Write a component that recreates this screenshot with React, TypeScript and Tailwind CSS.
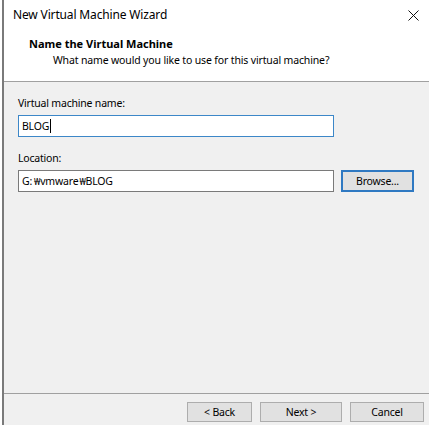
import React from "react";

export default function App() {
  return (
    <div
      className="w-[437px] h-[432px] bg-white overflow-hidden text-[10.5px] tracking-[-0.2px] text-black"
      style={{ fontFamily: '"Noto Sans", "Open Sans", sans-serif' }}
    >
      <div className="ml-[2px] w-[427px] h-[425px] border-l-2 border-[#7a7a7a] flex flex-col">
        {/* Title bar */}
        <div className="h-[30px] flex items-center justify-between bg-white">
          <span className="pl-[9px] leading-none text-[12px] tracking-[-0.15px]">New Virtual Machine Wizard</span>
          <svg width="11" height="11" viewBox="0 0 11 11" className="mr-[10px]">
            <path d="M0.5 0.5 L10.5 10.5 M10.5 0.5 L0.5 10.5" stroke="#111" strokeWidth="1" />
          </svg>
        </div>
        {/* Header */}
        <div className="h-[52px] bg-white border-b border-[#a0a0a0] flex flex-col">
          <div className="pl-[25px] pt-[6px] font-bold text-[11px] tracking-normal leading-[16px]">Name the Virtual Machine</div>
          <div className="pl-[49px] leading-[16px] tracking-[-0.15px]">What name would you like to use for this virtual machine?</div>
        </div>
        {/* Body */}
        <div className="flex-1 bg-[#f0f0f0] flex flex-col">
          <div className="flex-1 pl-[14px] pt-[13px]">
            <div className="leading-[16px]">Virtual machine name:</div>
            <div className="mt-[4px] w-[316px] h-[22px] bg-white border border-[#3c87c8] flex items-center pl-[3px]">
              <span className="leading-none">BLOG</span>
              <span className="ml-[1px] w-[1px] h-[14px] bg-black" />
            </div>
            <div className="mt-[13px] leading-[16px]">Location:</div>
            <div className="mt-[4px] flex items-center gap-[7px]">
              <div className="w-[316px] h-[22px] bg-white border border-[#7a7a7a] flex items-center pl-[3px]">
                <span className="leading-none">
                  G:<span className="ml-[2px] text-[9.5px]">₩</span>vmware<span className="ml-[1px] text-[9.5px]">₩</span>BLOG
                </span>
              </div>
              <div className="w-[73px] h-[22px] bg-[#e1e1e1] border-2 border-[#2f79c2] flex items-center justify-center">
                <span className="leading-none">Browse...</span>
              </div>
            </div>
          </div>
          <div className="h-[32px] border-t border-[#a0a0a0] flex items-end justify-end pr-[5px] gap-[8px] pb-[3px]">
            <div className="w-[65px] h-[20px] bg-[#e1e1e1] border border-[#adadad] flex items-center justify-center leading-none">&lt; Back</div>
            <div className="w-[82px] h-[20px] bg-[#e1e1e1] border border-[#adadad] flex items-center justify-center leading-none">Next &gt;</div>
            <div className="w-[74px] h-[20px] bg-[#e1e1e1] border border-[#adadad] flex items-center justify-center leading-none">Cancel</div>
          </div>
        </div>
      </div>
    </div>
  );
}
